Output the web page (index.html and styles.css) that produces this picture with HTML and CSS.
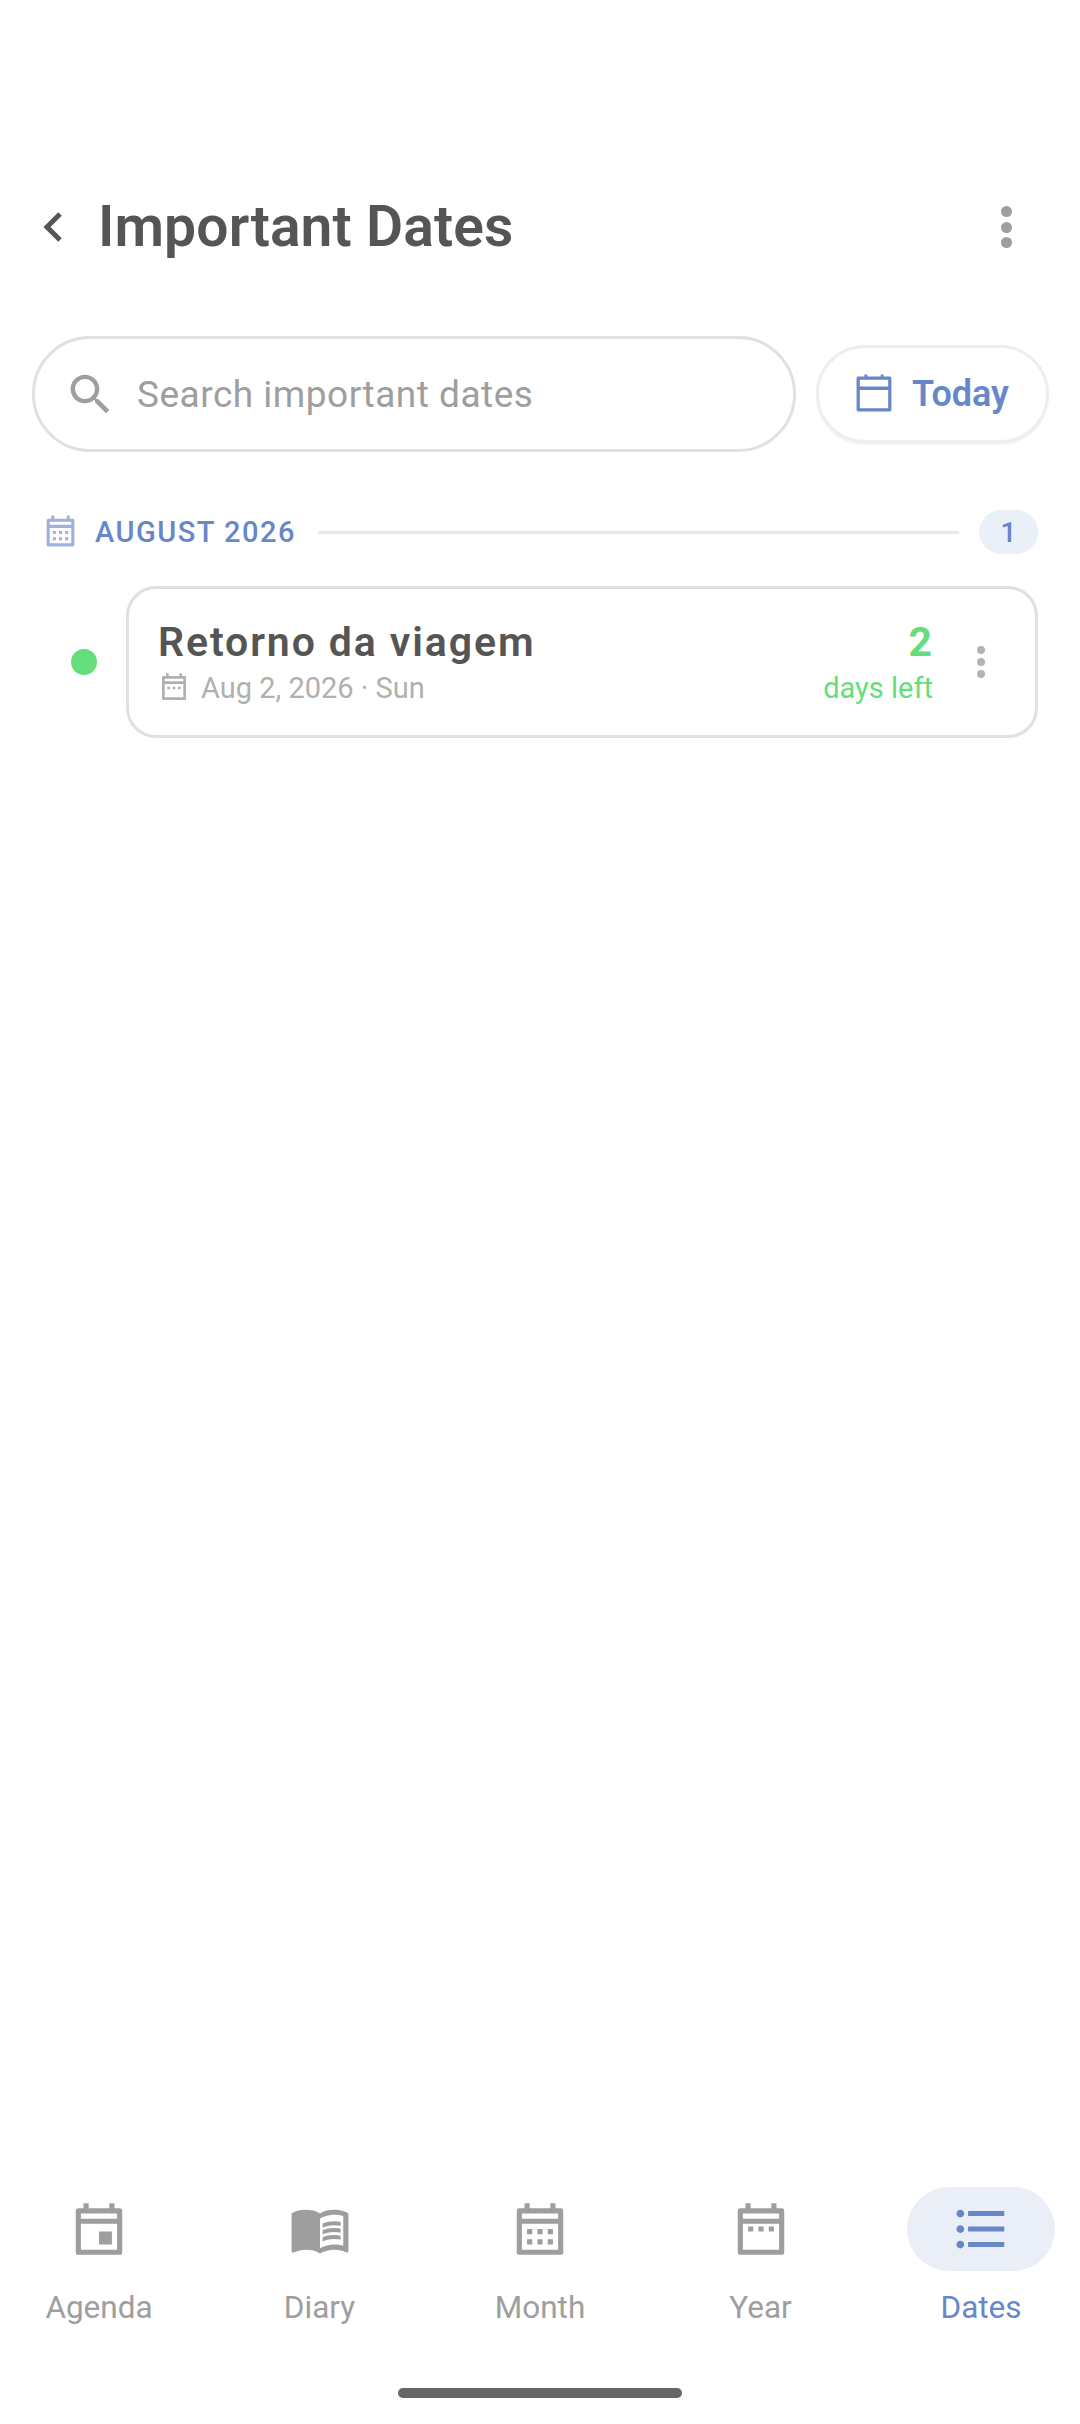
FILE: index.html
```html
<!DOCTYPE html>
<html lang="en">
<head>
<meta charset="utf-8">
<title>Important Dates</title>
<link rel="stylesheet" href="styles.css">
</head>
<body>
<div class="page">
  <header class="topbar">
    <svg class="back" viewBox="0 0 20 30"><path d="M17 2 4 15l13 13" fill="none" stroke="currentColor" stroke-width="5"/></svg>
    <h1 class="title">Important Dates</h1>
    <div class="kebab"><i></i><i></i><i></i></div>
  </header>

  <section class="tools">
    <div class="search">
      <svg class="search-icon" viewBox="0 0 24 24"><path d="M15.5 14h-.79l-.28-.27C15.41 12.59 16 11.11 16 9.5 16 5.91 13.09 3 9.5 3S3 5.91 3 9.5 5.91 16 9.5 16c1.61 0 3.09-.59 4.23-1.57l.27.28v.79l5 4.99L20.49 19l-4.99-5zm-6 0C7.01 14 5 11.99 5 9.5S7.01 5 9.5 5 14 7.01 14 9.5 11.99 14 9.5 14z"/></svg>
      <span class="placeholder">Search important dates</span>
    </div>
    <div class="today">
      <svg class="today-icon" viewBox="0 0 24 24"><path class="cal-line" d="M3.75 3.75h16.5v16.5H3.75zM3.75 9h16.5"/><path d="M7 1.8h1.5v2H7zM15.5 1.8H17v2h-1.5z"/></svg>
      <span>Today</span>
    </div>
  </section>

  <section class="month">
    <svg class="month-icon" viewBox="0 0 24 24"><path class="cal-line cal-thick" d="M4 4h16v16H4zM4 8h16"/><path d="M6 1h2v3H6zM16 1h2v3h-2zM7 11h2v2H7zM11 11h2v2h-2zM15 11h2v2h-2zM7 15h2v2H7zM11 15h2v2h-2zM15 15h2v2h-2z"/></svg>
    <span class="month-label">AUGUST 2026</span>
    <span class="month-line"></span>
    <span class="badge">1</span>
  </section>

  <section class="entry">
    <span class="dot"></span>
    <article class="card">
      <div class="card-main">
        <div class="card-title">Retorno da viagem</div>
        <div class="card-date">
          <svg class="date-icon" viewBox="0 0 24 24"><path class="cal-line cal-thick" d="M4 4h16v16H4zM4 8h16"/><path d="M6 1h2v3H6zM16 1h2v3h-2zM7 11h2v2H7zM11 11h2v2h-2zM15 11h2v2h-2z"/></svg>
          <span>Aug 2, 2026 · Sun</span>
        </div>
      </div>
      <div class="count">
        <div class="count-num">2</div>
        <div class="count-label">days left</div>
      </div>
      <div class="kebab kebab-small"><i></i><i></i><i></i></div>
    </article>
  </section>

  <nav class="nav">
    <div class="tab">
      <div class="pill">
        <svg class="nav-icon" viewBox="0 -1 24 24"><path class="cal-line cal-thick" d="M4 4h16v16H4zM4 8h16"/><path d="M6 1h2v3H6zM16 1h2v3h-2zM12 12h5v5h-5z"/></svg>
      </div>
      <span class="tab-label">Agenda</span>
    </div>
    <div class="tab">
      <div class="pill">
        <svg class="nav-icon" viewBox="0 0 24 24"><path d="M21 5c-1.11-.35-2.33-.5-3.5-.5-1.95 0-4.05.4-5.5 1.5-1.45-1.1-3.55-1.5-5.5-1.5S2.45 4.9 1 6v14.65c0 .25.25.5.5.5.1 0 .15-.05.25-.05C3.1 20.45 5.05 20 6.5 20c1.95 0 4.05.4 5.5 1.5 1.35-.85 3.8-1.5 5.5-1.5 1.65 0 3.35.3 4.75 1.05.1.05.15.05.25.05.25 0 .5-.25.5-.5V6c-.6-.45-1.25-.75-2-1zm0 13.5c-1.1-.35-2.3-.5-3.5-.5-1.7 0-4.15.65-5.5 1.5V8c1.35-.85 3.8-1.5 5.5-1.5 1.2 0 2.4.15 3.5.5v11.5z"/><path d="M17.5 10.5c.88 0 1.73.09 2.5.26V9.24c-.79-.15-1.64-.24-2.5-.24-1.7 0-3.24.29-4.5.83v1.66c1.13-.64 2.7-.99 4.5-.99zM13 12.49v1.66c1.13-.64 2.7-.99 4.5-.99.88 0 1.73.09 2.5.26V11.9c-.79-.15-1.64-.24-2.5-.24-1.7 0-3.24.3-4.5.83zM17.5 14.33c-1.7 0-3.24.29-4.5.83v1.66c1.13-.64 2.7-.99 4.5-.99.88 0 1.73.09 2.5.26v-1.52c-.79-.16-1.64-.24-2.5-.24z"/></svg>
      </div>
      <span class="tab-label">Diary</span>
    </div>
    <div class="tab">
      <div class="pill">
        <svg class="nav-icon" viewBox="0 -1 24 24"><path class="cal-line cal-thick" d="M4 4h16v16H4zM4 8h16"/><path d="M6 1h2v3H6zM16 1h2v3h-2zM7 11h2v2H7zM11 11h2v2h-2zM15 11h2v2h-2zM7 15h2v2H7zM11 15h2v2h-2zM15 15h2v2h-2z"/></svg>
      </div>
      <span class="tab-label">Month</span>
    </div>
    <div class="tab">
      <div class="pill">
        <svg class="nav-icon" viewBox="0 -1 24 24"><path class="cal-line cal-thick" d="M4 4h16v16H4zM4 8h16"/><path d="M6 1h2v3H6zM16 1h2v3h-2zM7 10h2v2H7zM11 10h2v2h-2zM15 10h2v2h-2z"/></svg>
      </div>
      <span class="tab-label">Year</span>
    </div>
    <div class="tab tab-active">
      <div class="pill">
        <svg class="nav-icon" viewBox="0 0 24 24"><path d="M4 10.5c-.83 0-1.5.67-1.5 1.5s.67 1.5 1.5 1.5 1.5-.67 1.5-1.5-.67-1.5-1.5-1.5zm0-6c-.83 0-1.5.67-1.5 1.5S3.17 7.5 4 7.5 5.5 6.83 5.5 6 4.83 4.5 4 4.5zm0 12c-.83 0-1.5.68-1.5 1.5s.68 1.5 1.5 1.5 1.5-.68 1.5-1.5-.67-1.5-1.5-1.5zM7 19h14v-2H7v2zm0-6h14v-2H7v2zm0-8v2h14V5H7z"/></svg>
      </div>
      <span class="tab-label">Dates</span>
    </div>
  </nav>
  <div class="home-area"><span class="home-bar"></span></div>
</div>
</body>
</html>
```

FILE: styles.css
```css
* { box-sizing: border-box; }
html, body { margin: 0; padding: 0; background: #fff; }
body { font-family: Roboto, "Noto Sans", sans-serif; color: #555; }
svg { display: block; fill: currentColor; flex: none; }
.cal-line { fill: none; stroke: currentColor; stroke-width: 1.7; stroke-linejoin: round; }
.cal-thick { stroke-width: 2; }

.page { width: 1080px; height: 2424px; display: flex; flex-direction: column; overflow: hidden; }

.topbar { height: 80px; margin-top: 187px; padding: 0 68px 0 43px; display: flex; align-items: center; }
.back { width: 20px; height: 30px; color: #555; }
.title { flex: 1; margin: 0 0 0 35px; font-size: 57px; line-height: 80px; font-weight: 560; letter-spacing: .1px; color: #555; }
.kebab { display: flex; flex-direction: column; gap: 4.5px; }
.kebab i { display: block; width: 11px; height: 11px; border-radius: 50%; background: #9e9e9e; }
.kebab-small { gap: 4px; margin-left: 44px; }
.kebab-small i { width: 8px; height: 8px; background: #b4b4b4; }

.tools { margin-top: 69px; padding: 0 31px 0 32px; display: flex; align-items: center; gap: 20px; height: 116px; }
.search { width: 764px; height: 116px; border: 3px solid #e0e0e0; border-radius: 58px; display: flex; align-items: center; padding-left: 29px; background: #fff; }
.search-icon { width: 53px; height: 53px; color: #9e9e9e; }
.placeholder { margin-left: 20px; font-size: 37px; letter-spacing: .5px; color: #9e9e9e; }
.today { width: 233px; height: 98px; border: 3px solid #eee; border-radius: 49px; box-shadow: 0 2px 2px rgba(0,0,0,.05); display: flex; align-items: center; padding-left: 32px; gap: 15px; color: #6787c8; font-size: 36px; font-weight: 560; background: #fff; }
.today-icon { width: 46px; height: 46px; color: #6787c8; }

.month { margin-top: 58px; padding: 0 42px 0 42px; height: 44px; display: flex; align-items: center; }
.month-icon { width: 37px; height: 37px; color: #9db1dc; }
.month-label { margin-left: 16px; font-size: 29px; font-weight: 500; letter-spacing: 1.5px; color: #6787c8; }
.month-line { flex: 1; height: 3px; margin: 0 20px 0 22px; background: #e8e8e8; }
.badge { width: 59px; height: 44px; border-radius: 22px; background: #eaf0f8; color: #6787c8; font-size: 28px; font-weight: 500; display: flex; align-items: center; justify-content: center; }

.entry { margin-top: 32px; padding: 0 42px 0 71px; display: flex; align-items: center; }
.dot { width: 26px; height: 26px; border-radius: 50%; background: #66dd7c; flex: none; }
.card { flex: 1; margin-left: 29px; height: 152px; border: 3px solid #e0e0e0; border-radius: 30px; background: #fff; display: flex; align-items: center; padding: 0 50px 0 29px; }
.card-main { flex: 1; }
.card-title { font-size: 41px; line-height: 47px; font-weight: 560; letter-spacing: 1.9px; color: #555; }
.card-date { margin-top: 4px; display: flex; align-items: center; gap: 11px; font-size: 29px; line-height: 36px; color: #b0b0b0; }
.date-icon { width: 32px; height: 32px; color: #b0b0b0; }
.count { text-align: right; color: #66dd7c; }
.count-num { font-size: 41px; line-height: 47px; font-weight: 700; padding-right: 1px; }
.count-label { margin-top: 4px; font-size: 29px; line-height: 36px; }

.nav { margin-top: auto; padding: 0 25px; display: flex; justify-content: space-between; }
.tab { width: 148px; display: flex; flex-direction: column; align-items: center; color: #9e9e9e; }
.pill { width: 148px; height: 84px; border-radius: 42px; display: flex; align-items: center; justify-content: center; }
.nav-icon { width: 62px; height: 62px; }
.tab-label { margin-top: 19px; font-size: 31.5px; line-height: 36px; }
.tab-active { color: #6787c8; }
.tab-active .pill { background: #e9eef7; }

.home-area { height: 98px; padding-top: 62px; display: flex; justify-content: center; }
.home-bar { width: 284px; height: 10px; border-radius: 5px; background: #666; }
```
